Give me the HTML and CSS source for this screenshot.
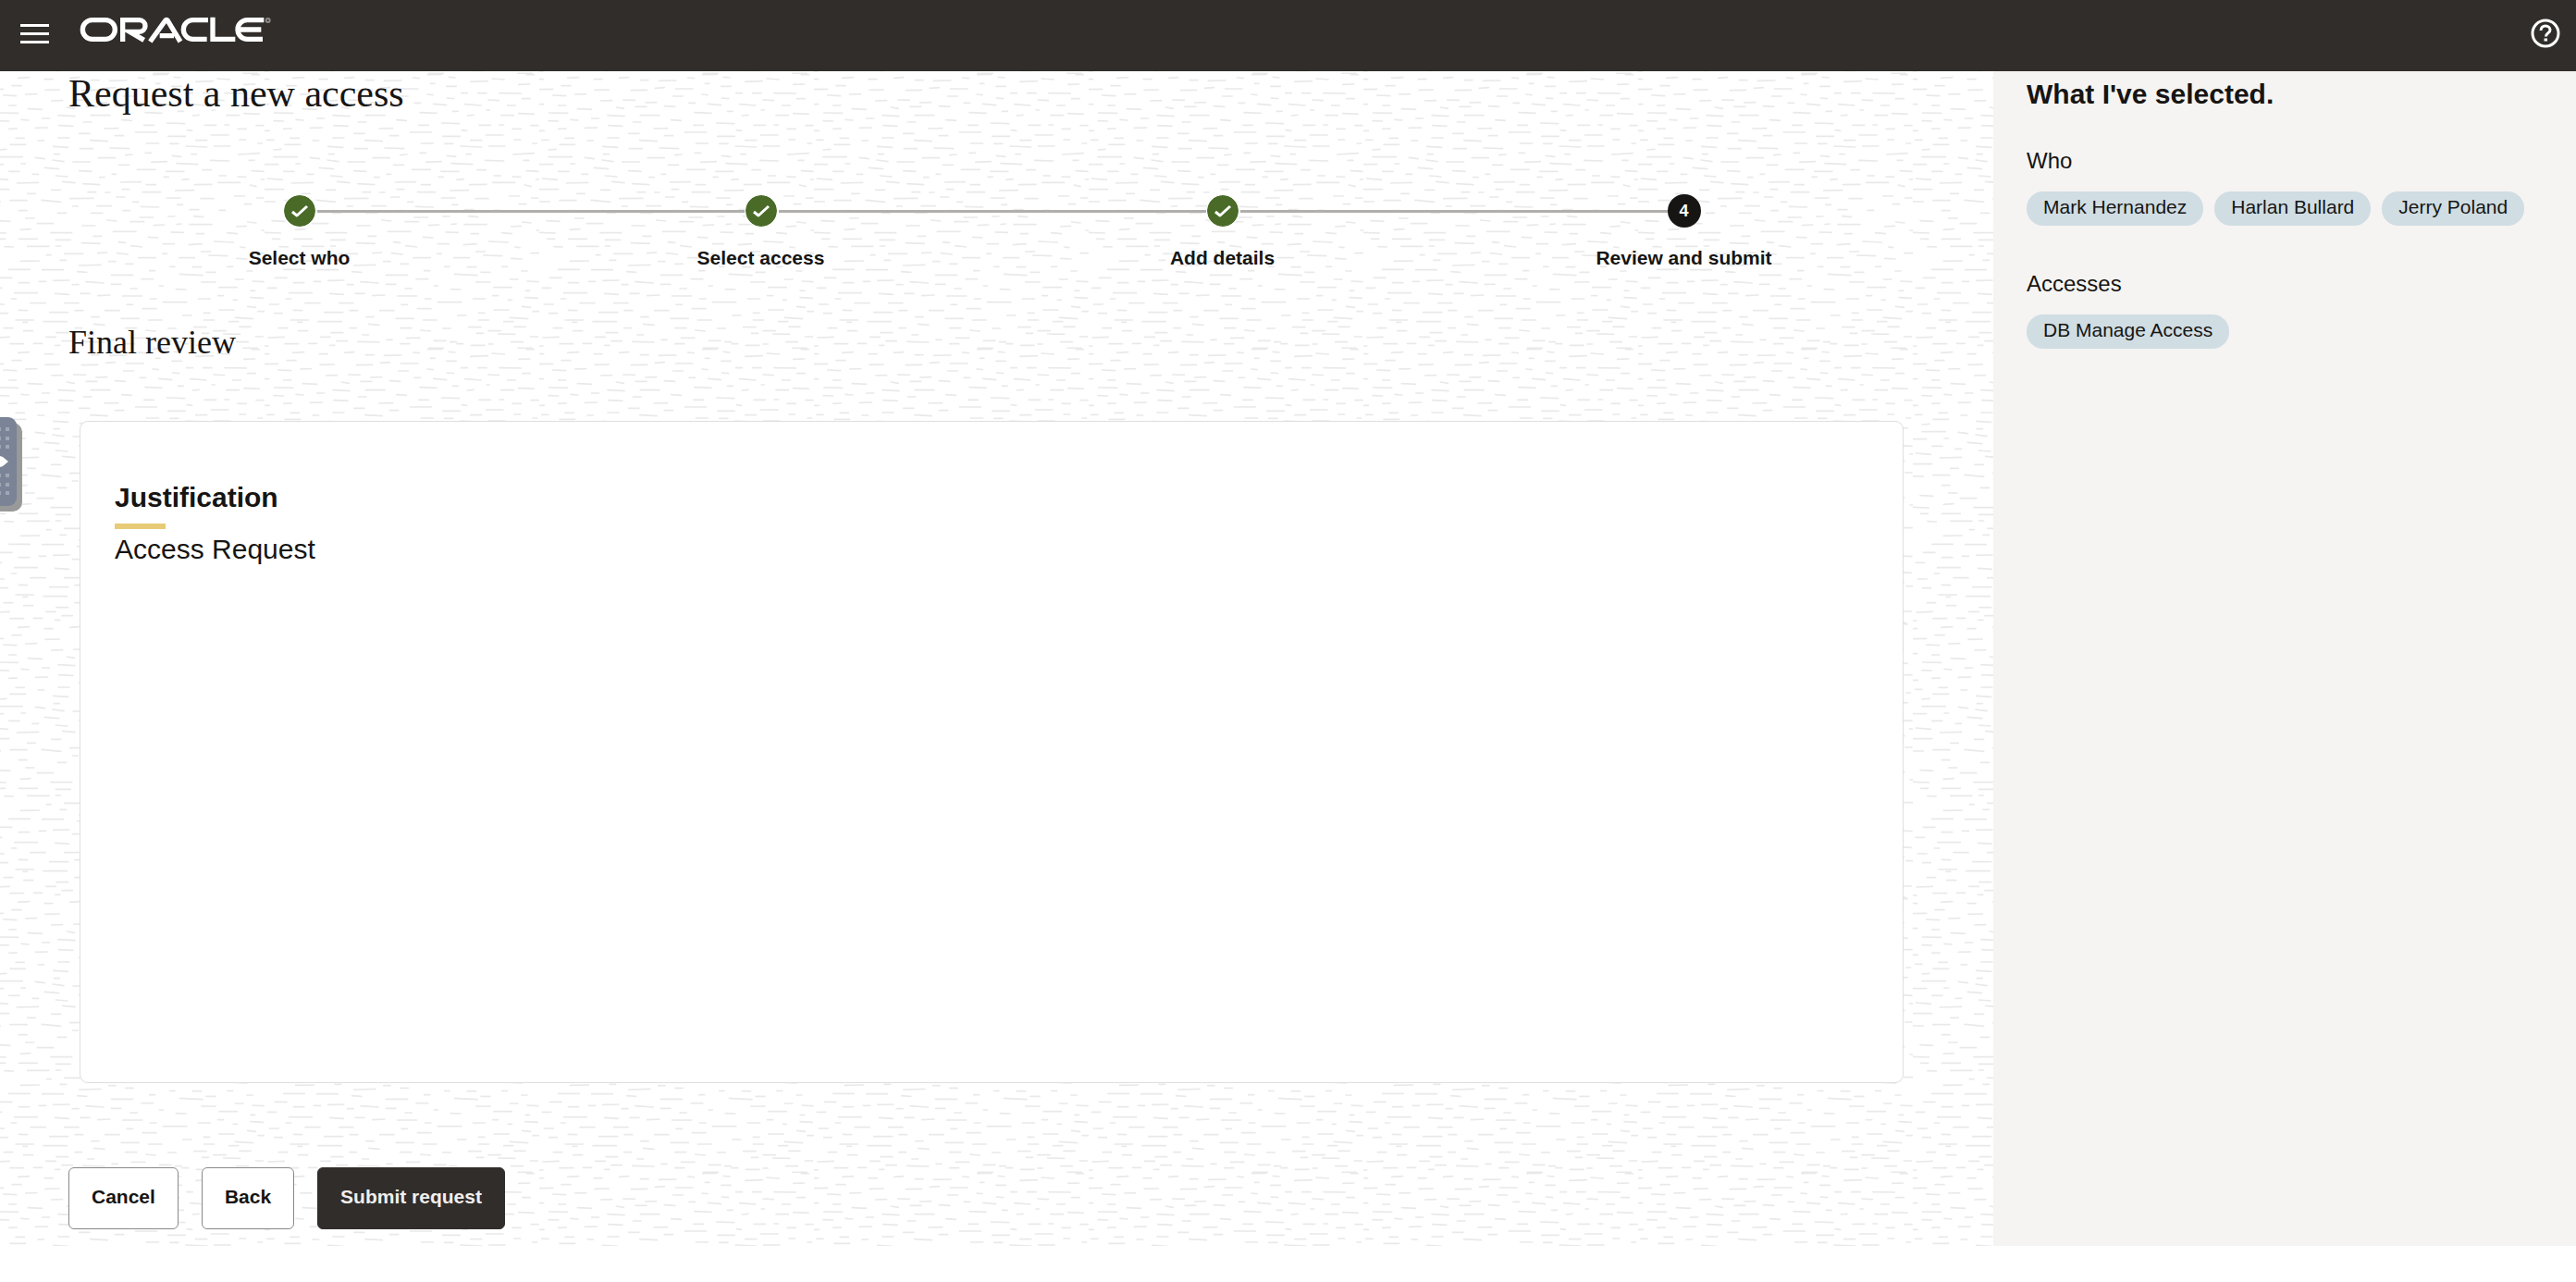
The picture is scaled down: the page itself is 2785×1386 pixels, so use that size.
FILE: index.html
```html
<!DOCTYPE html>
<html lang="en">
<head>
<meta charset="utf-8">
<meta name="viewport" content="width=device-width, initial-scale=1">
<title>Request a new access</title>
<link rel="stylesheet" href="styles.css">
</head>
<body>
<header class="topbar">
  <button class="icon-button" type="button" aria-label="Menu">
    <svg width="31" height="22" viewBox="0 0 31 22" fill="#fff" aria-hidden="true">
      <path d="M0 0h31v3H0zM0 9h31v3H0zM0 18h31v3H0z"/>
    </svg>
  </button>
  <a class="logo" href="#" aria-label="Oracle">
    <svg width="200" height="28" viewBox="228 25 600 84" fill="none" stroke="#fff" stroke-width="16" overflow="visible" aria-hidden="true">
      <rect x="238" y="36" width="105" height="62" rx="31"/>
      <path d="M368 106V36H422a19 19 0 0 1 0 38H391L437 101"/>
      <path d="M457 106L506 38Q510 32 514 38L555 106M488 87H534"/>
      <path d="M645 36H596a31 31 0 0 0 0 62H641"/>
      <path d="M660 27V98H733"/>
      <path d="M826 36H772a31 31 0 0 0 0 62H822M742 67H817"/>
      <circle cx="839" cy="37" r="6" stroke="#8d8987" stroke-width="6"/>
    </svg>
  </a>
  <button class="icon-button help" type="button" aria-label="Help">
    <svg width="32" height="32" viewBox="0 0 32 32" fill="none" stroke="#fff" stroke-width="3" aria-hidden="true">
      <circle cx="16" cy="16" r="14"/>
      <path d="M11 13c0-3 2-5 5-5s5 2 5 4.500c0 3-4.500 3.500-4.500 7"/>
      <path d="M14.500 23h3.500"/>
    </svg>
  </button>
</header>

<div class="layout">
  <main class="content">
    <h1 class="page-title">Request a new access</h1>

    <ol class="steps">
      <li class="step">
        <span class="marker done"><svg width="20" height="16" viewBox="0 0 20 16" aria-hidden="true"><path d="M2 9l5 4L18 3"/></svg></span>
        <span class="step-label">Select who</span>
      </li>
      <li class="step">
        <span class="marker done"><svg width="20" height="16" viewBox="0 0 20 16" aria-hidden="true"><path d="M2 9l5 4L18 3"/></svg></span>
        <span class="step-label">Select access</span>
      </li>
      <li class="step">
        <span class="marker done"><svg width="20" height="16" viewBox="0 0 20 16" aria-hidden="true"><path d="M2 9l5 4L18 3"/></svg></span>
        <span class="step-label">Add details</span>
      </li>
      <li class="step" aria-current="step">
        <span class="marker current">4</span>
        <span class="step-label">Review and submit</span>
      </li>
    </ol>

    <h2 class="section-title">Final review</h2>

    <section class="card">
      <h3 class="card-title">Justification</h3>
      <p class="card-text">Access Request</p>
    </section>

    <div class="actions">
      <button class="button" type="button">Cancel</button>
      <button class="button" type="button">Back</button>
      <button class="button primary" type="button">Submit request</button>
    </div>

    <button class="drawer-tab" type="button" aria-label="Open panel">
      <svg width="24" height="103" viewBox="0 0 24 103" aria-hidden="true">
        <path fill="#999" d="M0 6h14a10 10 0 0 1 10 10v76a10 10 0 0 1-10 10H0z"/>
        <path fill="#7a8496" d="M0 0h9a9 9 0 0 1 9 9v78a9 9 0 0 1-9 9H0z"/>
        <path fill="#a0a7b4" d="M6 11h4v4H6zM6 21h4v4H6zM6 30h4v4H6zM6 61h4v4H6zM6 71h4v4H6zM6 80h4v4H6zM0 11h1v4H0zM0 21h1v4H0zM0 30h1v4H0zM0 61h1v4H0zM0 71h1v4H0zM0 80h1v4H0z"/>
        <path fill="#fff" d="M0 42l3 1 6 5-6 5-3 1z"/>
      </svg>
    </button>
  </main>

  <aside class="summary">
    <h2 class="summary-title">What I've selected.</h2>
    <section class="group">
      <h3 class="group-title">Who</h3>
      <ul class="chips">
        <li class="chip">Mark Hernandez</li>
        <li class="chip">Harlan Bullard</li>
        <li class="chip">Jerry Poland</li>
      </ul>
    </section>
    <section class="group">
      <h3 class="group-title">Accesses</h3>
      <ul class="chips">
        <li class="chip">DB Manage Access</li>
      </ul>
    </section>
  </aside>
</div>
</body>
</html>
```
FILE: styles.css
```css
* { box-sizing: border-box; }

body {
  margin: 0;
  background: #fff;
  color: #161513;
  font-family: "Liberation Sans", Arial, sans-serif;
}

h1, h2, h3, p, ol, ul { margin: 0; padding: 0; }
ol, ul { list-style: none; }
button { font-family: inherit; cursor: pointer; }
svg { display: block; }

/* Top bar */
.topbar {
  display: flex;
  align-items: flex-start;
  height: 77px;
  padding: 18px 17px 0 22px;
  background: #312d2a;
}
.icon-button { padding: 0; border: 0; background: none; }
.topbar .icon-button { padding-top: 8px; }
.topbar .help { margin-left: auto; padding-top: 2px; }
.logo { margin-left: 33px; }

/* Page columns */
.layout { display: flex; }
.content {
  position: relative;
  flex: 1;
  min-width: 0;
  padding: 0 85px 18px 74px;
  /* hand-drawn dash texture */
  background-color: #fff;
  background-position: 286px 3px;
  background-size: 297px 297px;
  background-image: url("data:image/svg+xml,%3Csvg xmlns='http://www.w3.org/2000/svg' viewBox='0 0 891 891'%3E%3Cpath fill='none' stroke='%23e9e9e9' stroke-width='5' stroke-linecap='round' d='M0 17h14M92 13l36-2M178 17h26M260 13l30-2M328 20h26M388 22l56-1M482 12l20 2M530 2l46-1M598 10l20 2M668 25l56-2M738 15l40 3M824 34l36-1M850 2h24M0 50l44-1M72 38h30M180 52l46-1M298 53l52-1M376 46l30-2M442 48h56M538 31h14M590 40h32M638 62h20M692 62h28M762 62l70 1M44 69l42 2M116 66l36-1M200 87l36-1M272 84l38 1M434 72h32M528 66l18 2M592 78l22 2M726 84l34 2M836 80h26M0 98h14M62 102h24M124 113l46 2M250 108l24 4M312 106h36M344 93l36-1M406 104l34 2M486 94h20M548 97l42 4M650 98l52 4M720 117h10M788 102h26M32 126l60 1M102 148l24 2M30 152l32 1M170 144h24M222 134l54 3M328 134h62M304 156h26M428 149l32 2M504 125l54 2M610 121h18M658 135l20-2M768 134h40M824 128l50 2M148 175l40-1M224 167l46 2M62 178l26-1M0 184h16M290 193h34M372 177l44-1M500 166h32M574 159l58 2M640 182l16 2M696 166h38M762 165h14M804 178h28M864 167h24M472 189h70M406 200h28M578 202h56M718 198h56M84 208h28M222 207h36M8 214h22M156 216h20M326 215l56 3M668 215h36M810 213h20M870 225h14M66 229h50M206 235l48 3M30 246l24-2M292 242h42M390 240l62 2M508 225h40M584 226h28M636 234l68 3M728 234h52M208 260h18M440 263l22-2M504 256h20M592 265l28 3M654 260h16M806 261l68-4M30 269h76M148 271l30 4M204 279l36 5M270 285h56M352 272h54M418 295h34M524 286l50-2M606 290l68 3M716 280l60 2M840 280h18M0 293h44M102 291h14M178 304l46 4M62 316h34M290 314l40 2M478 310h60M572 316h58M690 311h28M850 314l38 2M138 325h20M214 330l38 3M356 335h16M396 325h14M564 334h16M624 343l22-2M744 330h22M804 333l26 1M10 339l48 4M88 354l70-2M236 349l40 4M302 356l54 3M424 351l66-1M508 359h30M664 359l56-1M740 352h72M844 360l20 5M880 342h10M0 374h62M122 388h26M200 376h30M318 383h26M374 384h16M430 374h22M496 383h58M602 378l60-1M66 410h54M168 409l62 6M260 404l76-1M410 399h28M464 415h18M490 430l58 2M574 402h44M684 404h42M794 396h32M866 402h22M0 414h34M268 429h18M348 428h46M608 424h18M826 422h22M648 440h30M744 442h20M94 443h26M432 443h22M328 451h38M220 451h28M24 476l42 2M116 468h28M154 485h52M300 492h42M380 474l30 3M456 479h44M486 465h44M532 491l34-2M578 462h22M606 488l16-2M648 488h72M662 461l30 3M800 495l32-2M836 480l28 3M0 514l52 2M100 505l32-2M198 515h68M94 535h60M214 538h48M336 526h26M400 511h74M514 529l32 2M588 513l40 1M670 518h24M770 515l32 3M882 507h8M26 535h24M48 560l28 1M122 559h70M214 558h16M298 548l60 2M418 545l22 2M458 557l36 4M562 551h36M646 554l42-3M728 543l62 3M812 561l16 2M100 607l60-1M184 587h14M228 604h20M242 583h60M350 581l30-2M412 581l36 4M386 608h22M290 621l70-2M440 616h26M482 596h56M560 583h14M614 596h50M686 576h30M710 588l60 2M800 598l34 2M864 581h26M62 634h68M170 635h68M284 641l30 2M34 661h38M94 677h34M160 673h22M206 670l52-1M312 674l58 4M394 682h32M394 652h70M492 665h38M518 638h18M584 625h16M658 626h28M616 649l74 4M702 643h30M770 625h18M796 666h26M834 639h18M852 672l36 2M10 694h28M268 683h20M80 710h74M212 712l44 3M294 712h30M350 719l40-2M456 696h22M430 720h64M550 687h12M604 698l32 1M686 675h46M744 692h58M676 729h40M740 719h18M846 703h14M846 725l40 2M70 729h16M16 747h30M132 743h48M242 743h46M444 748h20M520 729h20M562 740h76M496 761h44M790 733h12M836 754l26 3M94 766l28 1M32 776h26M194 773h60M276 767h26M374 767h46M744 765h48M694 775h20M626 783h28M870 770h20M84 798h58M108 805h14M174 803h76M330 788h24M426 793h58M514 798h44M338 811l34 3M694 798h34M796 790l58 4M776 803h30M46 824h28M110 833h30M276 824h22M440 824h36M506 831l32 3M578 825h26M662 821h40M810 820h36M726 833h40M216 839h38M318 846h20M182 853h32M12 855l52-2M396 862h18M460 856h44M550 865h38M688 841h22M758 843l54 1M862 852h24M66 875h44M142 874h28M234 866h34M212 880h16M302 868l70 2M440 875h30M602 869h20M624 875h20M670 880h44M532 889h48M726 876h16M800 869h38M822 889h46M0 882h12'/%3E%3C/svg%3E");
}

.page-title,
.section-title {
  font-family: "Liberation Serif", "Times New Roman", serif;
  font-weight: 400;
}
.page-title { font-size: 42px; line-height: 48px; }
.section-title { margin-top: 59px; font-size: 36px; line-height: 40px; }

/* Step train */
.steps {
  display: grid;
  grid-template-columns: repeat(4, 1fr);
  margin-top: 85px;
}
.step {
  position: relative;
  display: flex;
  flex-direction: column;
  align-items: center;
  gap: 21px;
}
/* connector from this marker to the next one */
.step:not(:last-child)::after {
  content: "";
  position: absolute;
  top: 17px;
  left: calc(50% + 19px);
  width: calc(100% - 37px);
  height: 3px;
  background: #b0afae;
}
.marker {
  display: flex;
  align-items: center;
  justify-content: center;
  width: 36px;
  height: 36px;
  border-radius: 50%;
}
.marker.done {
  border: 1px solid #fff;
  background: #4a6b28;
  background-clip: padding-box;
}
.marker path { fill: none; stroke: #fff; stroke-width: 3; stroke-linejoin: round; }
.marker.current { background: #161513; color: #fff; font-size: 18px; font-weight: 700; }
.step-label { font-size: 21px; line-height: 24px; font-weight: 700; }

/* Review card */
.card {
  min-height: 716px;
  margin: 65px 12px 0;
  padding: 64px 37px;
  border: 1px solid #dfdedd;
  border-radius: 9px;
  background: #fff;
}
.card-title { font-size: 30px; line-height: 36px; }
.card-title::after {
  content: "";
  display: block;
  width: 55px;
  height: 6px;
  margin-top: 10px;
  background: #e8cb77;
}
.card-text { margin-top: 4px; font-size: 30px; line-height: 36px; }

/* Buttons */
.actions { display: flex; gap: 25px; margin-top: 91px; }
.button {
  height: 67px;
  padding: 0 24px 4px;
  border: 1px solid #8b8987;
  border-radius: 6px;
  background: #fff;
  color: #161513;
  font-size: 21px;
  font-weight: 700;
}
.button.primary { border-color: #312d2a; background: #312d2a; color: #f1efed; }

/* Drawer handle over the left edge */
.drawer-tab {
  position: absolute;
  left: 0;
  top: 374px;
  padding: 0;
  border: 0;
  background: none;
}

/* Selection summary */
.summary {
  flex: 0 0 630px;
  padding: 7px 36px;
  background: #f5f4f2;
}
.summary-title { font-size: 30px; line-height: 36px; }
.group { margin-top: 40px; }
.group + .group { margin-top: 49px; }
.group-title { font-size: 24px; line-height: 28px; font-weight: 400; }
.chips { display: flex; flex-wrap: wrap; gap: 12px; margin-top: 19px; }
.chip {
  height: 37px;
  padding: 0 18px;
  border-radius: 18px;
  background: #d0dde3;
  font-size: 21px;
  line-height: 34px;
}
```
